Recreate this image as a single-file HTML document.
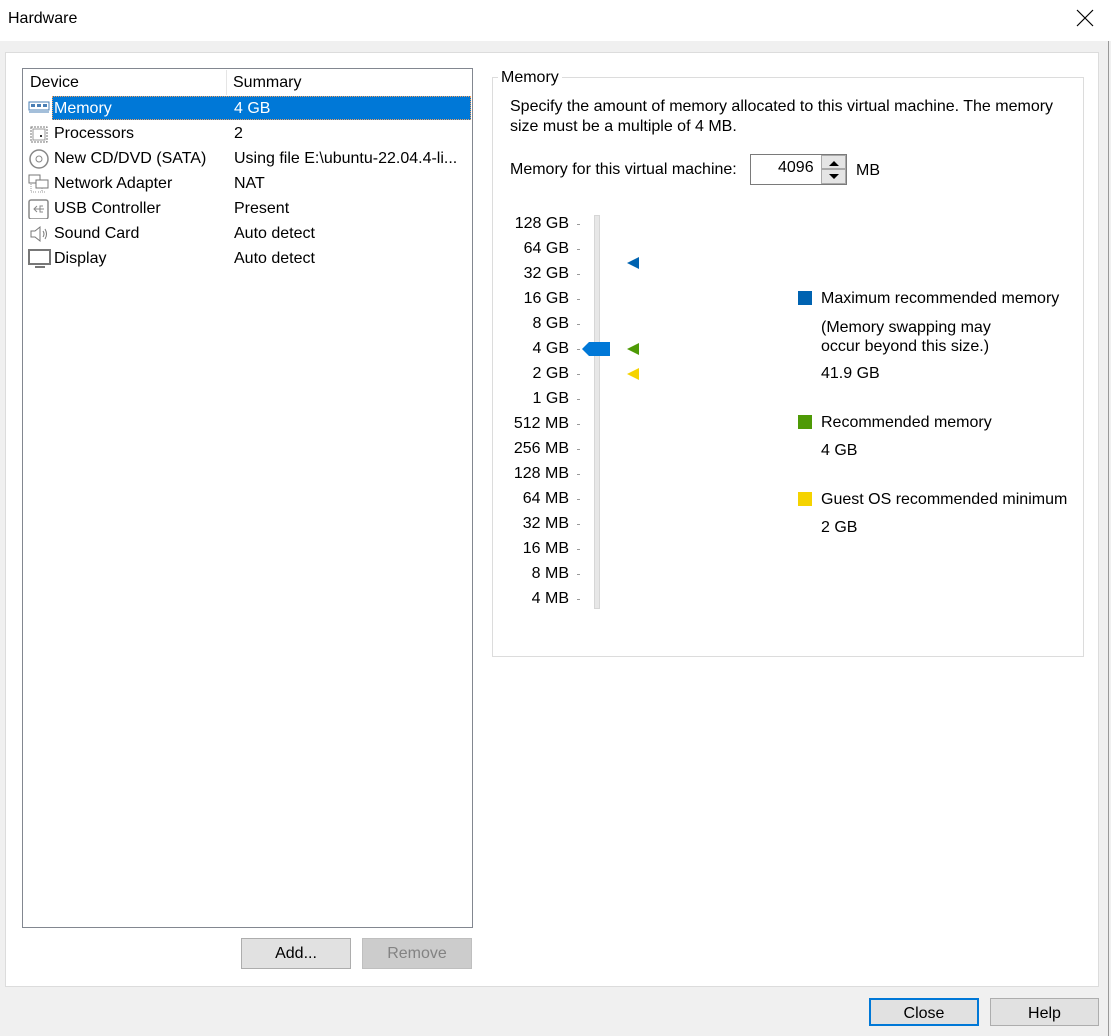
<!DOCTYPE html>
<html><head><style>
*{margin:0;padding:0;box-sizing:border-box}
body{width:1111px;height:1036px;background:#f0f0f0;font-family:"Liberation Sans",sans-serif;font-size:16px;color:#000;position:relative;overflow:hidden}
.a{position:absolute;white-space:nowrap}
.btn{position:absolute;background:#e1e1e1;border:1px solid #adadad;text-align:center;line-height:30px}
.row{position:absolute;left:24px;width:446px;height:25px;line-height:25px}
.row .n{position:absolute;left:30px}.row .s{position:absolute;left:210px}
.row svg{position:absolute;left:4px;top:3px}
.lbl{position:absolute;right:542px;text-align:right;line-height:16px}
.tk{position:absolute;left:577px;width:3px;height:1px;background:#999}
</style></head><body>
<div class="a" style="left:0;top:0;width:1111px;height:41px;background:#fff"></div>
<div class="a" style="left:8px;top:10px;font-size:16px">Hardware</div>
<svg class="a" style="left:1076px;top:9px" width="18" height="18"><path d="M1 1L17 17M17 1L1 17" stroke="#000" stroke-width="1.2"/></svg>
<div class="a" style="left:1108px;top:41px;width:3px;height:995px;background:#f0f0f0;border-left:1px solid #999"></div>
<div class="a" style="left:5px;top:52px;width:1094px;height:935px;background:#fff;border:1px solid #dcdcdc"></div>
<div class="a" style="left:22px;top:68px;width:451px;height:860px;background:#fff;border:1px solid #828790"></div>
<div class="a" style="left:30px;top:74px">Device</div>
<div class="a" style="left:226px;top:70px;width:1px;height:25px;background:#e5e5e5"></div>
<div class="a" style="left:233px;top:74px">Summary</div>
<div class="a" style="left:52px;top:96px;width:419px;height:24px;background:#0078d7;border:1px dotted #f0a060"></div>
<div class="row" style="top:96px;color:#fff"><svg width="22" height="16"><rect x="1" y="3" width="20" height="8" fill="#fff" stroke="#4a7fb5"/><rect x="3" y="5" width="4" height="3" fill="#4a7fb5"/><rect x="9" y="5" width="4" height="3" fill="#4a7fb5"/><rect x="15" y="5" width="4" height="3" fill="#4a7fb5"/><path d="M1 13h20" stroke="#4a7fb5"/></svg><span class="n">Memory</span><span class="s">4 GB</span></div>
<div class="row" style="top:121px"><svg width="22" height="20"><rect x="3" y="3" width="16" height="15" fill="none" stroke="#777" stroke-dasharray="2 1"/><rect x="5" y="5" width="12" height="11" fill="#fff" stroke="#999"/><rect x="12" y="11" width="2" height="2" fill="#333"/></svg><span class="n">Processors</span><span class="s">2</span></div>
<div class="row" style="top:146px"><svg width="22" height="20"><circle cx="11" cy="10" r="9" fill="#fff" stroke="#888" stroke-width="1.5"/><circle cx="11" cy="10" r="3" fill="none" stroke="#888"/></svg><span class="n">New CD/DVD (SATA)</span><span class="s">Using file E:\ubuntu-22.04.4-li...</span></div>
<div class="row" style="top:171px"><svg width="22" height="20"><rect x="1" y="1" width="11" height="8" fill="#fff" stroke="#777"/><rect x="8" y="6" width="12" height="8" fill="#fff" stroke="#777"/><path d="M14 14v4M10 18h8M3 10v8h5" stroke="#999" fill="none" stroke-dasharray="1 1"/></svg><span class="n">Network Adapter</span><span class="s">NAT</span></div>
<div class="row" style="top:196px"><svg width="22" height="20"><rect x="1" y="1" width="19" height="19" rx="2" fill="#fff" stroke="#888" stroke-width="1.5"/><path d="M6 10h10M9 7l-3 3 3 3M12 10v-3h3M12 10v3h3" stroke="#888" fill="none"/></svg><span class="n">USB Controller</span><span class="s">Present</span></div>
<div class="row" style="top:221px"><svg width="22" height="20"><path d="M3 7h4l5-4v14l-5-4H3z" fill="#fff" stroke="#777"/><path d="M15 7q2 3 0 6M17 5q3 5 0 10" stroke="#777" fill="none"/></svg><span class="n">Sound Card</span><span class="s">Auto detect</span></div>
<div class="row" style="top:246px"><svg width="24" height="20"><rect x="1" y="1" width="21" height="14" fill="#fff" stroke="#777" stroke-width="2"/><path d="M7 18h10" stroke="#777" stroke-width="2"/></svg><span class="n">Display</span><span class="s">Auto detect</span></div>
<div class="btn" style="left:241px;top:938px;width:110px;height:31px">Add...</div>
<div class="btn" style="left:362px;top:938px;width:110px;height:31px;background:#cccccc;border-color:#bfbfbf;color:#838383">Remove</div>
<div class="a" style="left:492px;top:77px;width:592px;height:580px;border:1px solid #dcdcdc"></div>
<div class="a" style="left:498px;top:69px;background:#fff;padding:0 3px">Memory</div>
<div class="a" style="left:510px;top:97px;line-height:20px">Specify the amount of memory allocated to this virtual machine. The memory<br>size must be a multiple of 4 MB.</div>
<div class="a" style="left:510px;top:161px">Memory for this virtual machine:</div>
<div class="a" style="left:750px;top:154px;width:97px;height:31px;border:1px solid #7a7a7a;background:#fff"></div>
<div class="a" style="left:778px;top:159px">4096</div>
<div class="a" style="left:821px;top:155px;width:25px;height:14px;background:#e5e5e5;border:1px solid #aaa"></div>
<div class="a" style="left:821px;top:169px;width:25px;height:15px;background:#e5e5e5;border:1px solid #aaa"></div>
<svg class="a" style="left:827px;top:158px" width="14" height="24"><path d="M2 8L7 3L12 8Z M2 16L7 21L12 16Z" fill="#000"/></svg>
<div class="a" style="left:856px;top:162px">MB</div>
<div class="a" style="left:594px;top:215px;width:6px;height:394px;background:#e7e7e7;border:1px solid #d6d6d6"></div>
<div class="lbl" style="top:216px">128 GB</div><div class="tk" style="top:224px"></div>
<div class="lbl" style="top:241px">64 GB</div><div class="tk" style="top:249px"></div>
<div class="lbl" style="top:266px">32 GB</div><div class="tk" style="top:274px"></div>
<div class="lbl" style="top:291px">16 GB</div><div class="tk" style="top:299px"></div>
<div class="lbl" style="top:316px">8 GB</div><div class="tk" style="top:324px"></div>
<div class="lbl" style="top:341px">4 GB</div><div class="tk" style="top:349px"></div>
<div class="lbl" style="top:366px">2 GB</div><div class="tk" style="top:374px"></div>
<div class="lbl" style="top:391px">1 GB</div><div class="tk" style="top:399px"></div>
<div class="lbl" style="top:416px">512 MB</div><div class="tk" style="top:424px"></div>
<div class="lbl" style="top:441px">256 MB</div><div class="tk" style="top:449px"></div>
<div class="lbl" style="top:466px">128 MB</div><div class="tk" style="top:474px"></div>
<div class="lbl" style="top:491px">64 MB</div><div class="tk" style="top:499px"></div>
<div class="lbl" style="top:516px">32 MB</div><div class="tk" style="top:524px"></div>
<div class="lbl" style="top:541px">16 MB</div><div class="tk" style="top:549px"></div>
<div class="lbl" style="top:566px">8 MB</div><div class="tk" style="top:574px"></div>
<div class="lbl" style="top:591px">4 MB</div><div class="tk" style="top:599px"></div>
<svg class="a" style="left:580px;top:340px" width="64" height="42">
<path d="M2 9L9 2H30V16H9Z" fill="#0078d7"/>
<path d="M59 3V15L47 9Z" fill="#4e9a06"/>
<path d="M59 28V40L47 34Z" fill="#f5d300"/>
</svg>
<svg class="a" style="left:626px;top:256px" width="14" height="14"><path d="M13 1V13L1 7Z" fill="#0063b1"/></svg>
<div class="a" style="left:798px;top:291px;width:14px;height:14px;background:#0063b1"></div>
<div class="a" style="left:821px;top:290px">Maximum recommended memory</div>
<div class="a" style="left:821px;top:318px;line-height:19px">(Memory swapping may<br>occur beyond this size.)</div>
<div class="a" style="left:821px;top:365px">41.9 GB</div>
<div class="a" style="left:798px;top:415px;width:14px;height:14px;background:#4e9a06"></div>
<div class="a" style="left:821px;top:414px">Recommended memory</div>
<div class="a" style="left:821px;top:442px">4 GB</div>
<div class="a" style="left:798px;top:492px;width:14px;height:14px;background:#f5d300"></div>
<div class="a" style="left:821px;top:491px">Guest OS recommended minimum</div>
<div class="a" style="left:821px;top:519px">2 GB</div>
<div class="btn" style="left:869px;top:998px;width:110px;height:28px;border:2px solid #0078d7;line-height:27px">Close</div>
<div class="btn" style="left:990px;top:998px;width:109px;height:28px;line-height:29px">Help</div>
</body></html>
